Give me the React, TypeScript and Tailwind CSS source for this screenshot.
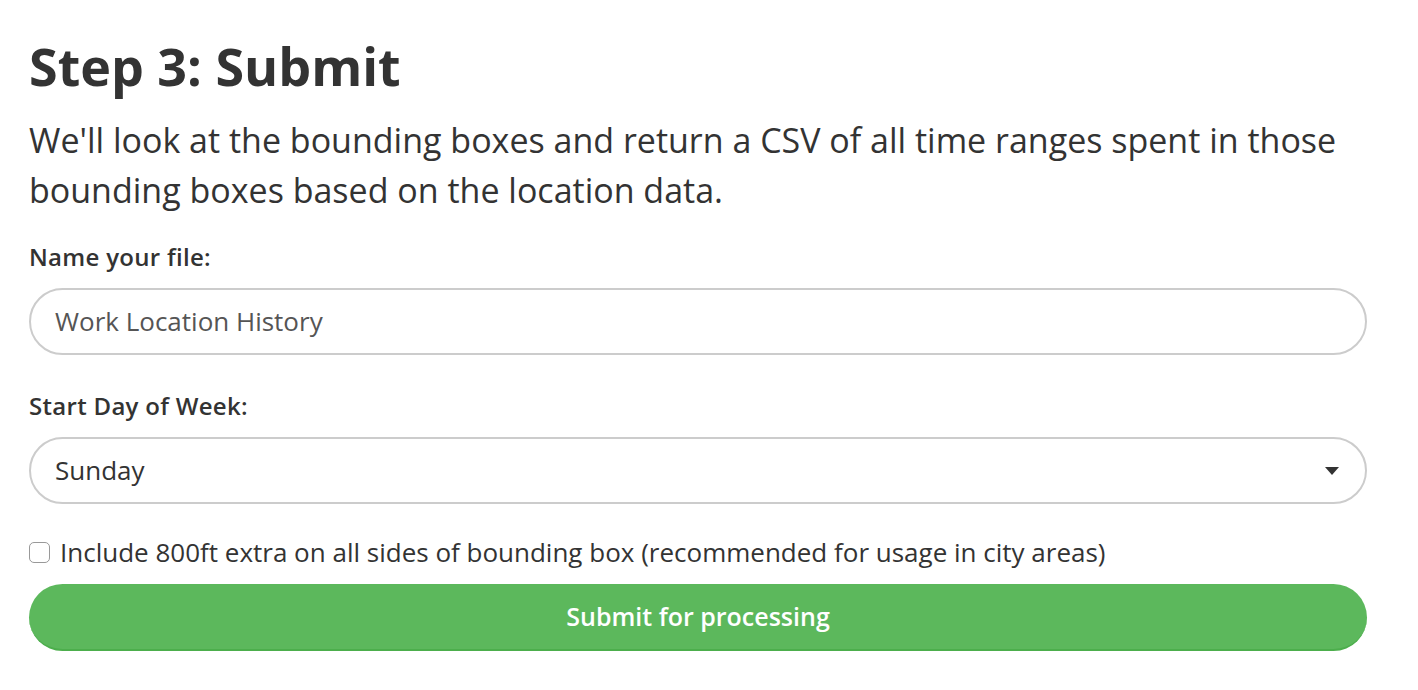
import React from "react";

export default function App() {
  return (
    <div className="min-h-screen bg-white text-[#333] px-[29px] pt-[30px]" style={{ fontFamily: "'Open Sans', sans-serif" }}>
      <div className="w-[1338px]">
        <h1 className="text-[52px] font-bold leading-[72px] text-[#333]">Step 3: Submit</h1>
        <p className="text-[34px] leading-[50px] mt-[13px] text-[#333]">
          We'll look at the bounding boxes and return a CSV of all time ranges spent in those bounding boxes based on the location data.
        </p>
        <div className="mt-[27px] text-[24px] font-semibold tracking-[0.3px] leading-[30px]">Name your file:</div>
        <div className="mt-[16px] h-[67px] rounded-full border-2 border-[#ccc] flex items-center px-[24px] text-[26px] text-[#555]">
          Work Location History
        </div>
        <div className="mt-[36px] text-[24px] font-semibold tracking-[0.3px] leading-[30px]">Start Day of Week:</div>
        <div className="mt-[16px] h-[67px] rounded-full border-2 border-[#ccc] flex items-center justify-between pl-[24px] pr-[25px] text-[26px] text-[#333]">
          <span>Sunday</span>
          <svg width="16" height="10" viewBox="0 0 16 10"><path d="M1 1h14L8 9z" fill="#333" /></svg>
        </div>
        <div className="mt-[33px] flex items-center gap-[10px] text-[26px] leading-[30px]">
          <span className="w-[21px] h-[21px] rounded-[5px] border border-[#999] bg-white inline-block" />
          <span>Include 800ft extra on all sides of bounding box (recommended for usage in city areas)</span>
        </div>
        <button className="mt-[17px] w-full h-[67px] rounded-full bg-[#5cb85c] border-b-2 border-[#4cae4c] text-white text-[25px] font-semibold flex items-center justify-center">
          Submit for processing
        </button>
      </div>
    </div>
  );
}
